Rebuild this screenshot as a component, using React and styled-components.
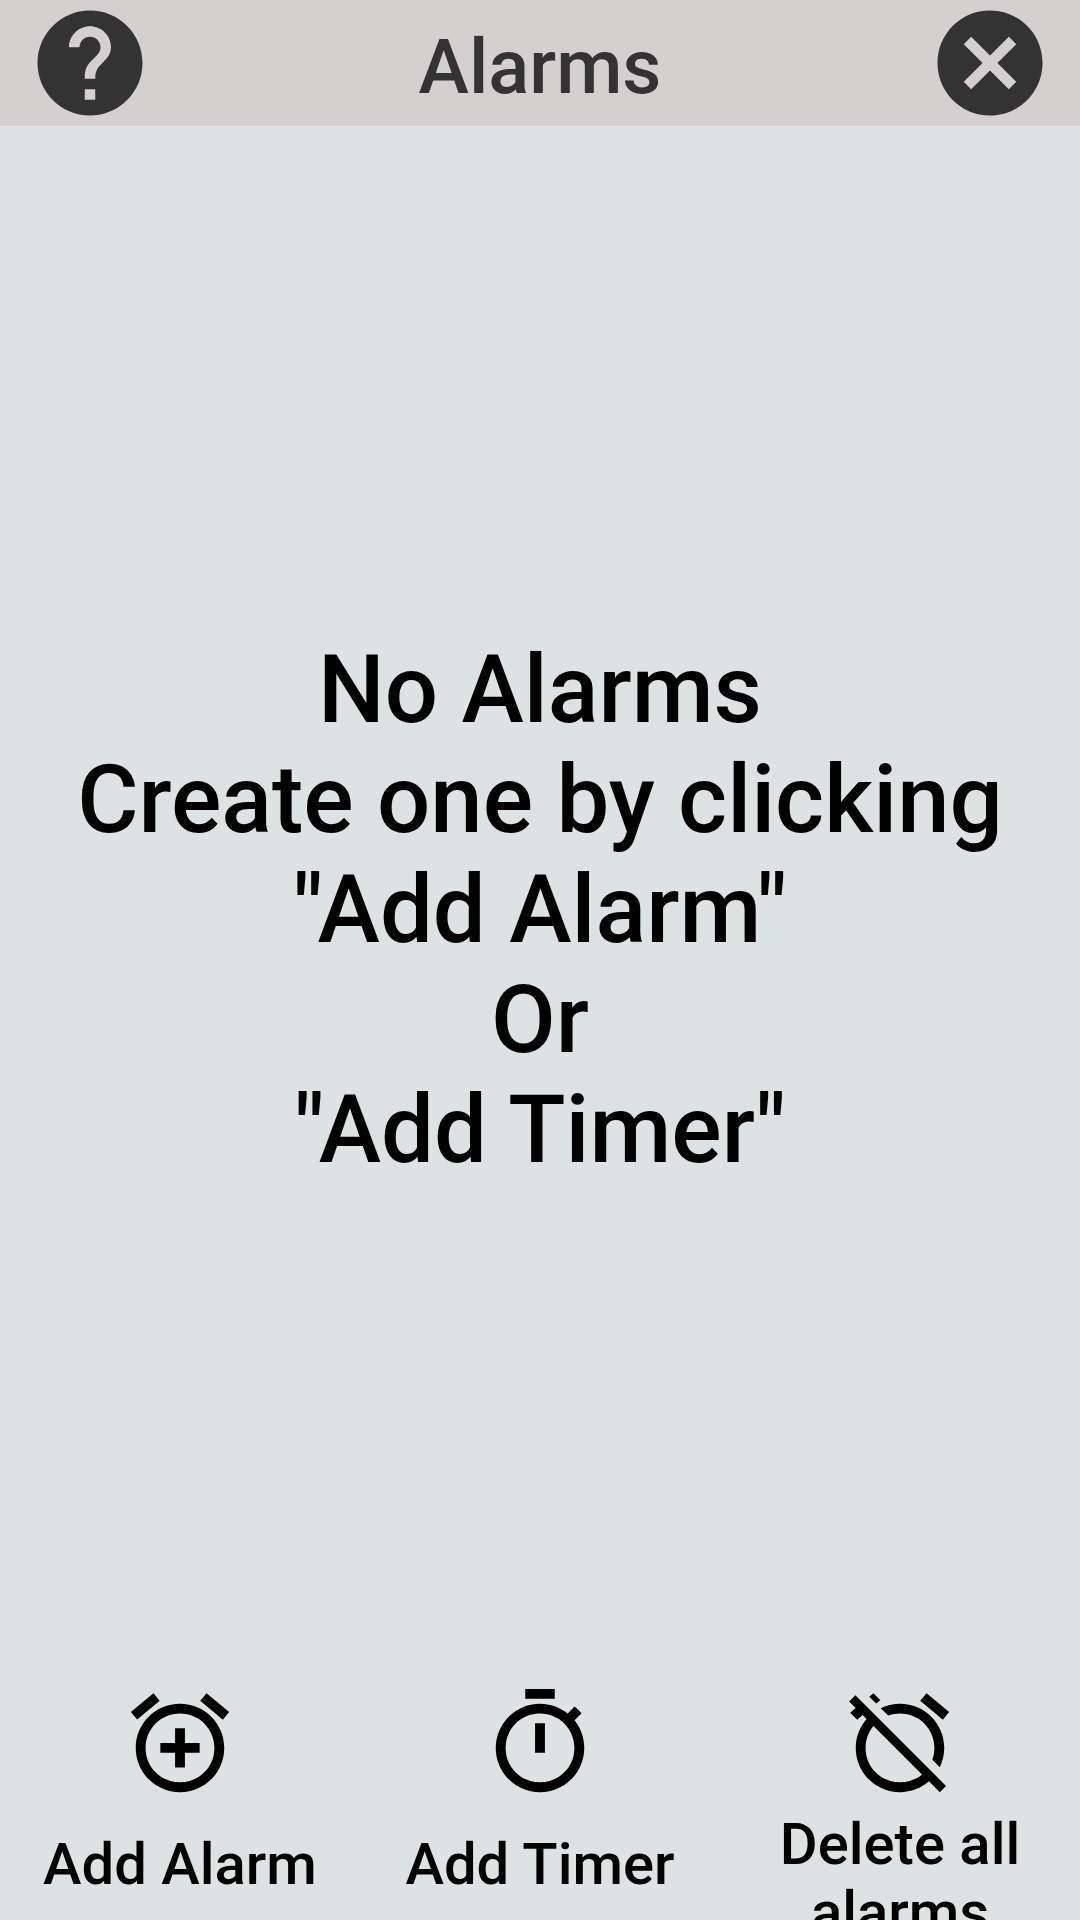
import React from "react";
import styled, { createGlobalStyle } from "styled-components";

const GlobalStyle = createGlobalStyle`
  *, *::before, *::after { box-sizing: border-box; }
  body {
    margin: 0;
    background: #dde3e3;
    color: #000;
    font-family: Roboto, "Liberation Sans", sans-serif;
    font-weight: 500;
  }
`;

const Screen = styled.div`
  display: flex;
  flex-direction: column;
  height: 100vh;
  overflow: hidden;
`;

const TopBar = styled.header`
  display: grid;
  grid-template-columns: 1fr 4fr 1fr;
  align-items: center;
  flex: none;
  background: #d4d0cf;
  color: #333;
`;

const Title = styled.h1`
  margin: 0;
  padding-top: 8px;
  font-size: 76px;
  line-height: 88px;
  font-weight: 500;
  text-align: center;
`;

const PlainButton = styled.button`
  display: flex;
  flex-direction: column;
  align-items: center;
  border: 0;
  padding: 0;
  background: none;
  color: inherit;
  font: inherit;
  cursor: pointer;
`;

const Icon = styled.svg`
  display: block;
  flex: none;
  width: ${(p) => p.$size}px;
  height: ${(p) => p.$size}px;
  fill: currentColor;
`;

const Content = styled.main`
  display: flex;
  flex: 1;
  align-items: center;
  justify-content: center;
  padding-top: 10px;
`;

const EmptyMessage = styled.p`
  margin: 0;
  font-size: 94px;
  line-height: 110px;
  text-align: center;
`;

const Actions = styled.footer`
  display: grid;
  grid-template-columns: repeat(3, 1fr);
  flex: none;
  padding-bottom: 2px;
`;

const ActionButton = styled(PlainButton)`
  gap: 8px;
`;

const Label = styled.span`
  display: flex;
  align-items: safe center;
  justify-content: center;
  width: 100%;
  height: 108px;
  padding: 0 32px;
  font-size: 58px;
  line-height: 68px;
  text-align: center;
`;

const paths = {
  help: "M12 2C6.48 2 2 6.48 2 12s4.48 10 10 10 10-4.48 10-10S17.52 2 12 2zm1 17h-2v-2h2v2zm2.07-7.75l-.9.92C13.45 12.9 13 13.5 13 15h-2v-.5c0-1.1.45-2.1 1.17-2.83l1.24-1.26c.37-.36.59-.86.59-1.41 0-1.1-.9-2-2-2s-2 .9-2 2H8c0-2.21 1.79-4 4-4s4 1.79 4 4c0 .88-.36 1.68-.93 2.25z",
  close: "M12 2C6.47 2 2 6.47 2 12s4.47 10 10 10 10-4.47 10-10S17.53 2 12 2zm5 13.59L15.59 17 12 13.41 8.41 17 7 15.59 10.59 12 7 8.41 8.41 7 12 10.59 15.59 7 17 8.41 13.41 12 17 15.59z",
  addAlarm: "M7.88 3.39L6.6 1.86 2 5.71l1.29 1.53 4.59-3.85zM22 5.72l-4.6-3.86-1.29 1.53 4.6 3.86L22 5.72zM12 4c-4.97 0-9 4.03-9 9s4.02 9 9 9c4.97 0 9-4.03 9-9s-4.03-9-9-9zm0 16c-3.87 0-7-3.13-7-7s3.13-7 7-7 7 3.13 7 7-3.13 7-7 7zm1-11h-2v3H8v2h3v3h2v-3h3v-2h-3V9z",
  timer: "M15 1H9v2h6V1zm-4 13h2V8h-2v6zm8.03-6.61l1.42-1.42c-.43-.51-.9-.99-1.41-1.41l-1.42 1.42C16.07 4.74 14.12 4 12 4c-4.97 0-9 4.03-9 9s4.02 9 9 9 9-4.03 9-9c0-2.12-.74-4.07-1.97-5.61zM12 20c-3.87 0-7-3.13-7-7s3.13-7 7-7 7 3.13 7 7-3.13 7-7 7z",
  alarmOff: "M12 6c3.87 0 7 3.13 7 7 0 .84-.16 1.65-.43 2.4l1.52 1.52c.58-1.19.91-2.51.91-3.92 0-4.97-4.03-9-9-9-1.41 0-2.73.33-3.92.91L9.6 6.43C10.35 6.16 11.16 6 12 6zm10-.28l-4.6-3.86-1.29 1.53 4.6 3.86L22 5.72zM2.92 2.29L1.65 3.57 2.98 4.9l-1.11.93 1.42 1.42 1.11-.94.8.8C3.83 8.69 3 10.75 3 13c0 4.97 4.02 9 9 9 2.25 0 4.31-.83 5.89-2.2l2.2 2.2 1.27-1.27L3.89 3.27l-.97-.98zm13.55 16.1C15.26 19.39 13.7 20 12 20c-3.87 0-7-3.13-7-7 0-1.7.61-3.26 1.61-4.47l9.86 9.86zM8.02 3.28L6.6 1.86l-.86.71 1.42 1.42.86-.71z",
};

function Glyph({ name, size }) {
  return (
    <Icon $size={size} viewBox="0 0 24 24" aria-hidden="true">
      <path d={paths[name]} />
    </Icon>
  );
}

const actions = [
  { icon: "addAlarm", label: "Add Alarm" },
  { icon: "timer", label: "Add Timer" },
  { icon: "alarmOff", label: "Delete all alarms" },
];

export default function App() {
  return (
    <Screen>
      <GlobalStyle />
      <TopBar>
        <PlainButton type="button" aria-label="Help">
          <Glyph name="help" size={126} />
        </PlainButton>
        <Title>Alarms</Title>
        <PlainButton type="button" aria-label="Close">
          <Glyph name="close" size={126} />
        </PlainButton>
      </TopBar>
      <Content>
        <EmptyMessage>
          No Alarms
          <br />
          Create one by clicking
          <br />
          "Add Alarm"
          <br />
          Or
          <br />
          "Add Timer"
        </EmptyMessage>
      </Content>
      <Actions>
        {actions.map(({ icon, label }) => (
          <ActionButton type="button" key={icon}>
            <Glyph name={icon} size={118} />
            <Label>{label}</Label>
          </ActionButton>
        ))}
      </Actions>
    </Screen>
  );
}
